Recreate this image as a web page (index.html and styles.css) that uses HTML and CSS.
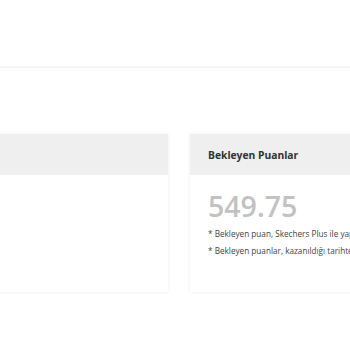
FILE: index.html
```html
<!DOCTYPE html>
<html lang="tr">
<head>
  <meta charset="UTF-8">
  <title>Puanlarım</title>
  <link rel="stylesheet" href="styles.css">
</head>
<body>
  <div class="top-bar"></div>
  <div class="cards">
    <div class="card">
      <div class="card-head"></div>
      <div class="card-body"></div>
    </div>
    <div class="card">
      <div class="card-head">Bekleyen Puanlar</div>
      <div class="card-body">
        <div class="points">549.75</div>
        <p class="note">* Bekleyen puan, Skechers Plus ile yaptığınız alışverişlerden kazandığınız puanlardır.</p>
        <p class="note">* Bekleyen puanlar, kazanıldığı tarihten itibaren 14 gün sonra kullanılabilir.</p>
      </div>
    </div>
  </div>
</body>
</html>
```

FILE: styles.css
```css
body {
  margin: 0;
  background: #fff;
  font-family: 'Open Sans', sans-serif;
  color: #333;
  overflow: hidden;
  width: 350px;
  height: 350px;
}
.top-bar {
  height: 66px;
  border-bottom: 2px solid #f4f4f4;
}
.cards {
  display: flex;
  gap: 22px;
  margin-top: 66px;
  margin-left: -132px;
}
.card {
  flex: 0 0 300px;
  background: #fff;
  box-shadow: 0 0 3px rgba(0,0,0,0.08);
  overflow: hidden;
}
.card-head {
  height: 41px;
  background: #efefef;
  padding-left: 18px;
  display: flex;
  align-items: center;
  font-size: 10.3px;
  font-weight: 700;
  color: #333;
}
.card-body {
  height: 76px;
  padding: 15px 18px 26px;
}
.points {
  font-size: 28.5px;
  font-weight: 600;
  color: #c2c2c2;
  line-height: 32px;
}
.note {
  margin: 6px 0 0;
  font-size: 8.2px;
  line-height: 11px;
  color: #444;
  white-space: nowrap;
}
```
